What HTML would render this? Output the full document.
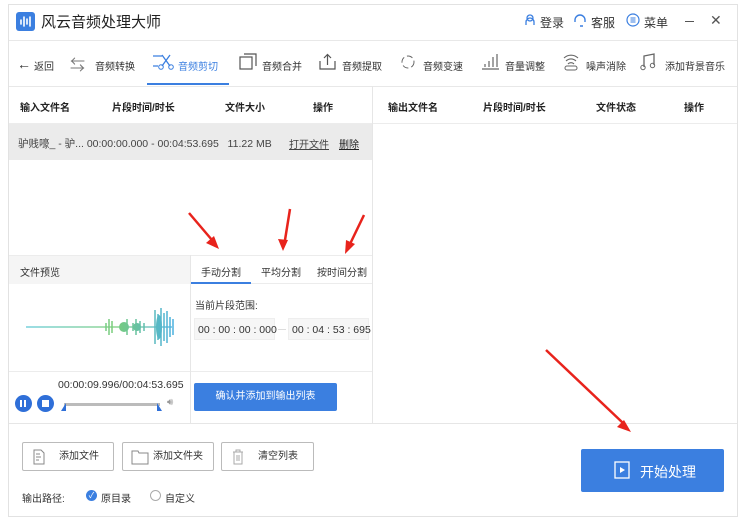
<!DOCTYPE html>
<html><head><meta charset="utf-8"><style>
*{box-sizing:border-box;margin:0;padding:0}
body{width:743px;height:526px;background:#fff;font-family:"Liberation Sans","Noto Sans CJK SC",sans-serif;position:relative;overflow:hidden;color:#333}
.a{position:absolute}
.t{font-size:10px;white-space:nowrap}
.b{font-weight:bold;font-size:10px;color:#222}
.btn{position:absolute;border:1px solid #bbb;border-radius:2px;background:#fff;height:29px;top:442px;font-size:10px;color:#333}
.btn span{position:absolute;top:0;line-height:27px}
</style></head><body>
<div class="a" style="left:8px;top:4px;width:730px;height:513px;border:1px solid #e2e2e2"></div>
<!-- title -->
<div class="a" style="left:16px;top:12px;width:19px;height:19px;background:#3b7fe0;border-radius:3px"></div>
<svg class="a" style="left:16px;top:12px" width="19" height="19"><g stroke="#fff" stroke-width="1.6" stroke-linecap="round"><line x1="5" y1="8" x2="5" y2="12"/><line x1="8" y1="5" x2="8" y2="14"/><line x1="11" y1="7" x2="11" y2="12"/><line x1="14" y1="5" x2="14" y2="14"/></g></svg>
<div class="a" style="left:41px;top:11px;font-size:15px;color:#222">风云音频处理大师</div>
<svg class="a" style="left:523px;top:13px" width="14" height="14"><path d="M3 12V9a4 4 0 0 1 8 0v3M4 5a3 3 0 0 1 6 0 3 3 0 0 1-6 0" fill="none" stroke="#3b7fe0" stroke-width="1.3"/></svg>
<div class="a t" style="left:540px;top:14px;font-size:12px">登录</div>
<svg class="a" style="left:573px;top:13px" width="14" height="14"><path d="M2 9V7a5 5 0 0 1 10 0v2M7 13h3" fill="none" stroke="#3b7fe0" stroke-width="1.4"/></svg>
<div class="a t" style="left:591px;top:14px;font-size:12px">客服</div>
<svg class="a" style="left:626px;top:13px" width="14" height="14"><circle cx="7" cy="7" r="6" fill="none" stroke="#3b7fe0" stroke-width="1.2"/><path d="M4.5 5h5M4.5 7h5M4.5 9h5" stroke="#3b7fe0"/></svg>
<div class="a t" style="left:644px;top:14px;font-size:12px">菜单</div>
<div class="a" style="left:685px;top:21px;width:9px;height:1px;background:#555"></div>
<div class="a" style="left:710px;top:12px;font-size:14px;color:#555">✕</div>
<div class="a" style="left:9px;top:40px;width:728px;height:1px;background:#e8e8e8"></div>
<!-- toolbar -->
<div class="a t" style="left:17px;top:56px;font-size:14px;color:#333">←</div><div class="a t" style="left:34px;top:58px">返回</div>
<div class="a t" style="left:70px;top:54px;font-size:15px;color:#777">⇆</div><div class="a t" style="left:95px;top:58px">音频转换</div>
<svg class="a" style="left:152px;top:53px" width="22" height="18"><path d="M1 3h9M1 13h5" stroke="#3b7fe0" stroke-width="1.3"/><path d="M10 2l8 11M18 2l-8 11" stroke="#3b7fe0" stroke-width="1.3"/><circle cx="9" cy="14" r="2.3" fill="none" stroke="#3b7fe0"/><circle cx="19" cy="14" r="2.3" fill="none" stroke="#3b7fe0"/></svg>
<div class="a t" style="left:178px;top:58px;color:#3b7fe0">音频剪切</div>
<div class="a" style="left:147px;top:83px;width:82px;height:2px;background:#3b7fe0"></div>
<svg class="a" style="left:239px;top:53px" width="20" height="18"><rect x="1" y="4" width="12" height="12" fill="none" stroke="#555" stroke-width="1.2"/><path d="M5 1h12v12" fill="none" stroke="#555" stroke-width="1.2"/></svg>
<div class="a t" style="left:262px;top:58px">音频合并</div>
<svg class="a" style="left:319px;top:53px" width="18" height="18"><path d="M1 8v8h15V8M8.5 12V2M5 5l3.5-3.5L12 5" fill="none" stroke="#555" stroke-width="1.2"/></svg>
<div class="a t" style="left:342px;top:58px">音频提取</div>
<svg class="a" style="left:400px;top:54px" width="16" height="16"><circle cx="8" cy="8" r="6" fill="none" stroke="#666" stroke-dasharray="6 3"/></svg>
<div class="a t" style="left:423px;top:58px">音频变速</div>
<svg class="a" style="left:481px;top:53px" width="20" height="18"><path d="M1 16h17M4 14v-3M8 14V8M12 14V4M16 14V1" stroke="#666" stroke-width="1.2"/></svg>
<div class="a t" style="left:505px;top:58px">音量调整</div>
<svg class="a" style="left:562px;top:52px" width="18" height="20"><path d="M2 6a10 10 0 0 1 14 0M4 9a7 7 0 0 1 10 0M6 12a4 4 0 0 1 6 0" fill="none" stroke="#666" stroke-width="1.1"/><rect x="3" y="14" width="12" height="4" rx="2" fill="none" stroke="#666"/></svg>
<div class="a t" style="left:586px;top:58px">噪声消除</div>
<svg class="a" style="left:640px;top:53px" width="16" height="18"><path d="M4 14V3l10-2v11" fill="none" stroke="#666" stroke-width="1.3"/><circle cx="3" cy="14.5" r="2.2" fill="none" stroke="#666"/><circle cx="12.5" cy="12.5" r="2.2" fill="none" stroke="#666"/></svg>
<div class="a t" style="left:665px;top:58px">添加背景音乐</div>
<div class="a" style="left:9px;top:86px;width:728px;height:1px;background:#e8e8e8"></div>
<!-- table headers -->
<div class="a b" style="left:20px;top:99px">输入文件名</div>
<div class="a b" style="left:112px;top:99px">片段时间/时长</div>
<div class="a b" style="left:225px;top:99px">文件大小</div>
<div class="a b" style="left:313px;top:99px">操作</div>
<div class="a b" style="left:388px;top:99px">输出文件名</div>
<div class="a b" style="left:483px;top:99px">片段时间/时长</div>
<div class="a b" style="left:596px;top:99px">文件状态</div>
<div class="a b" style="left:684px;top:99px">操作</div>
<div class="a" style="left:9px;top:123px;width:728px;height:1px;background:#ececec"></div>
<div class="a" style="left:372px;top:86px;width:1px;height:337px;background:#e6e6e6"></div>
<div class="a" style="left:9px;top:124px;width:363px;height:36px;background:#ebebeb"></div>
<div class="a t" style="left:18px;top:136px;font-size:10.5px;color:#444">驴贱嚎_ - 驴... 00:00:00.000 - 00:04:53.695 &nbsp;&nbsp;11.22 MB</div>
<div class="a t" style="left:289px;top:136px;text-decoration:underline;color:#444">打开文件</div>
<div class="a t" style="left:339px;top:136px;text-decoration:underline;color:#222">删除</div>
<!-- preview -->
<div class="a" style="left:9px;top:255px;width:363px;height:1px;background:#ececec"></div>
<div class="a" style="left:9px;top:256px;width:181px;height:28px;background:#f5f5f5"></div>
<div class="a t" style="left:20px;top:264px">文件预览</div>
<div class="a" style="left:190px;top:255px;width:1px;height:168px;background:#e6e6e6"></div>
<div class="a t" style="left:201px;top:264px">手动分割</div>
<div class="a" style="left:191px;top:282px;width:60px;height:2px;background:#3b7fe0"></div>
<div class="a t" style="left:261px;top:264px">平均分割</div>
<div class="a t" style="left:317px;top:264px">按时间分割</div>
<div class="a" style="left:251px;top:283px;width:121px;height:1px;background:#ececec"></div>
<svg class="a" style="left:24px;top:305px" width="150" height="45">
<defs><linearGradient id="g" gradientUnits="userSpaceOnUse" x1="0" y1="0" x2="150" y2="0"><stop offset="0" stop-color="#5cc8d8"/><stop offset=".6" stop-color="#7acd7a"/><stop offset="1" stop-color="#4ab0e0"/></linearGradient></defs>
<g stroke="url(#g)" stroke-width="1.5" fill="url(#g)"><line x1="2" y1="22" x2="148" y2="22" stroke-width="1.2"/>
<path d="M82 18v8M85 14v16M88 16v12M100 18v8M103 14v16M109 18v8M112 14v16M116 16v12M120 18v8M131 5v34M134 9v26M137 3v38M146 12v20M140 8v28M143 6v32M149 14v16" fill="none"/>
<ellipse cx="100" cy="22" rx="5" ry="5" stroke="none"/><ellipse cx="113" cy="22" rx="4" ry="4" stroke="none"/><ellipse cx="135" cy="22" rx="3" ry="12" stroke="none"/></g>
</svg>
<div class="a" style="left:9px;top:371px;width:181px;height:1px;background:#ececec"></div>
<div class="a t" style="left:58px;top:379px;font-size:10.5px">00:00:09.996/00:04:53.695</div>
<div class="a" style="left:15px;top:395px;width:17px;height:17px;border-radius:50%;background:#2f6fd8"></div>
<div class="a" style="left:20px;top:400px;width:2px;height:7px;background:#fff;box-shadow:4px 0 #fff"></div>
<div class="a" style="left:37px;top:395px;width:17px;height:17px;border-radius:50%;background:#2f6fd8"></div>
<div class="a" style="left:42px;top:400px;width:7px;height:7px;background:#fff"></div>
<div class="a" style="left:64px;top:403px;width:96px;height:3px;background:#bbb"></div>
<div class="a" style="left:61px;top:403px;width:5px;height:8px;background:#2f6fd8;clip-path:polygon(100% 0,100% 100%,0 100%)"></div>
<div class="a" style="left:157px;top:403px;width:5px;height:8px;background:#2f6fd8;clip-path:polygon(0 0,100% 100%,0 100%)"></div>
<div class="a t" style="left:167px;top:397px;color:#999">🔊︎</div>
<!-- split panel -->
<div class="a t" style="left:195px;top:297px">当前片段范围:</div>
<div class="a t" style="left:194px;top:318px;width:81px;height:22px;background:#f6f6f6;border:1px solid #eee;padding:5px 3px;font-size:10.5px">00 : 00 : 00 : 000</div>
<div class="a" style="left:278px;top:329px;width:8px;height:1px;background:#ddd"></div>
<div class="a t" style="left:288px;top:318px;width:81px;height:22px;background:#f6f6f6;border:1px solid #eee;padding:5px 3px;font-size:10.5px">00 : 04 : 53 : 695</div>
<div class="a" style="left:191px;top:371px;width:181px;height:1px;background:#ececec"></div>
<div class="a t" style="left:194px;top:383px;width:143px;height:28px;background:#3b7fe0;border-radius:2px;color:#fff;text-align:center;line-height:28px">确认并添加到输出列表</div>
<div class="a" style="left:9px;top:423px;width:728px;height:1px;background:#e6e6e6"></div>
<!-- bottom -->
<div class="btn" style="left:22px;width:92px"><svg class="a" style="left:10px;top:6px" width="12" height="16"><path d="M1 1h7l3 3v11H1z M3 5h4M3 8h5M3 11h3" fill="none" stroke="#888"/></svg><span style="left:36px">添加文件</span></div>
<div class="btn" style="left:122px;width:92px"><svg class="a" style="left:8px;top:7px" width="18" height="15"><path d="M1 1h6l1 2h9v11H1z" fill="none" stroke="#888"/></svg><span style="left:30px">添加文件夹</span></div>
<div class="btn" style="left:221px;width:93px"><svg class="a" style="left:10px;top:6px" width="12" height="16"><path d="M1 3h10M4 3V1h4v2M2 3v12h8V3M5 6v6M7 6v6" fill="none" stroke="#aaa"/></svg><span style="left:36px">清空列表</span></div>
<div class="a t" style="left:22px;top:490px">输出路径:</div>
<div class="a" style="left:86px;top:490px;width:11px;height:11px;border-radius:50%;background:#3b7fe0;color:#fff;font-size:8px;text-align:center;line-height:11px">✓</div>
<div class="a t" style="left:101px;top:490px">原目录</div>
<div class="a" style="left:150px;top:490px;width:11px;height:11px;border-radius:50%;border:1px solid #aaa"></div>
<div class="a t" style="left:165px;top:490px">自定义</div>
<div class="a" style="left:581px;top:449px;width:143px;height:43px;background:#3b7fe0;border-radius:2px"></div>
<svg class="a" style="left:614px;top:461px" width="16" height="18"><rect x="1" y="1" width="14" height="16" fill="none" stroke="#fff" stroke-width="1.3"/><path d="M6 6l5 3-5 3z" fill="#fff"/></svg>
<div class="a t" style="left:640px;top:462px;font-size:14px;color:#fff">开始处理</div>
<!-- arrows -->
<svg class="a" style="left:0;top:0" width="743" height="526"><g stroke="#e8231c" stroke-width="2.5" fill="#e8231c">
<line x1="189" y1="213" x2="212" y2="240"/><path d="M219 249l-13-6 8-7z" stroke="none"/>
<line x1="290" y1="209" x2="285" y2="240"/><path d="M283 251l-5-12 10 1z" stroke="none"/>
<line x1="364" y1="215" x2="350" y2="244"/><path d="M345 254l1-14 9 4z" stroke="none"/>
<line x1="546" y1="350" x2="623" y2="423"/><path d="M631 432l-14-5 7-7z" stroke="none"/>
</g></svg>
</body></html>
